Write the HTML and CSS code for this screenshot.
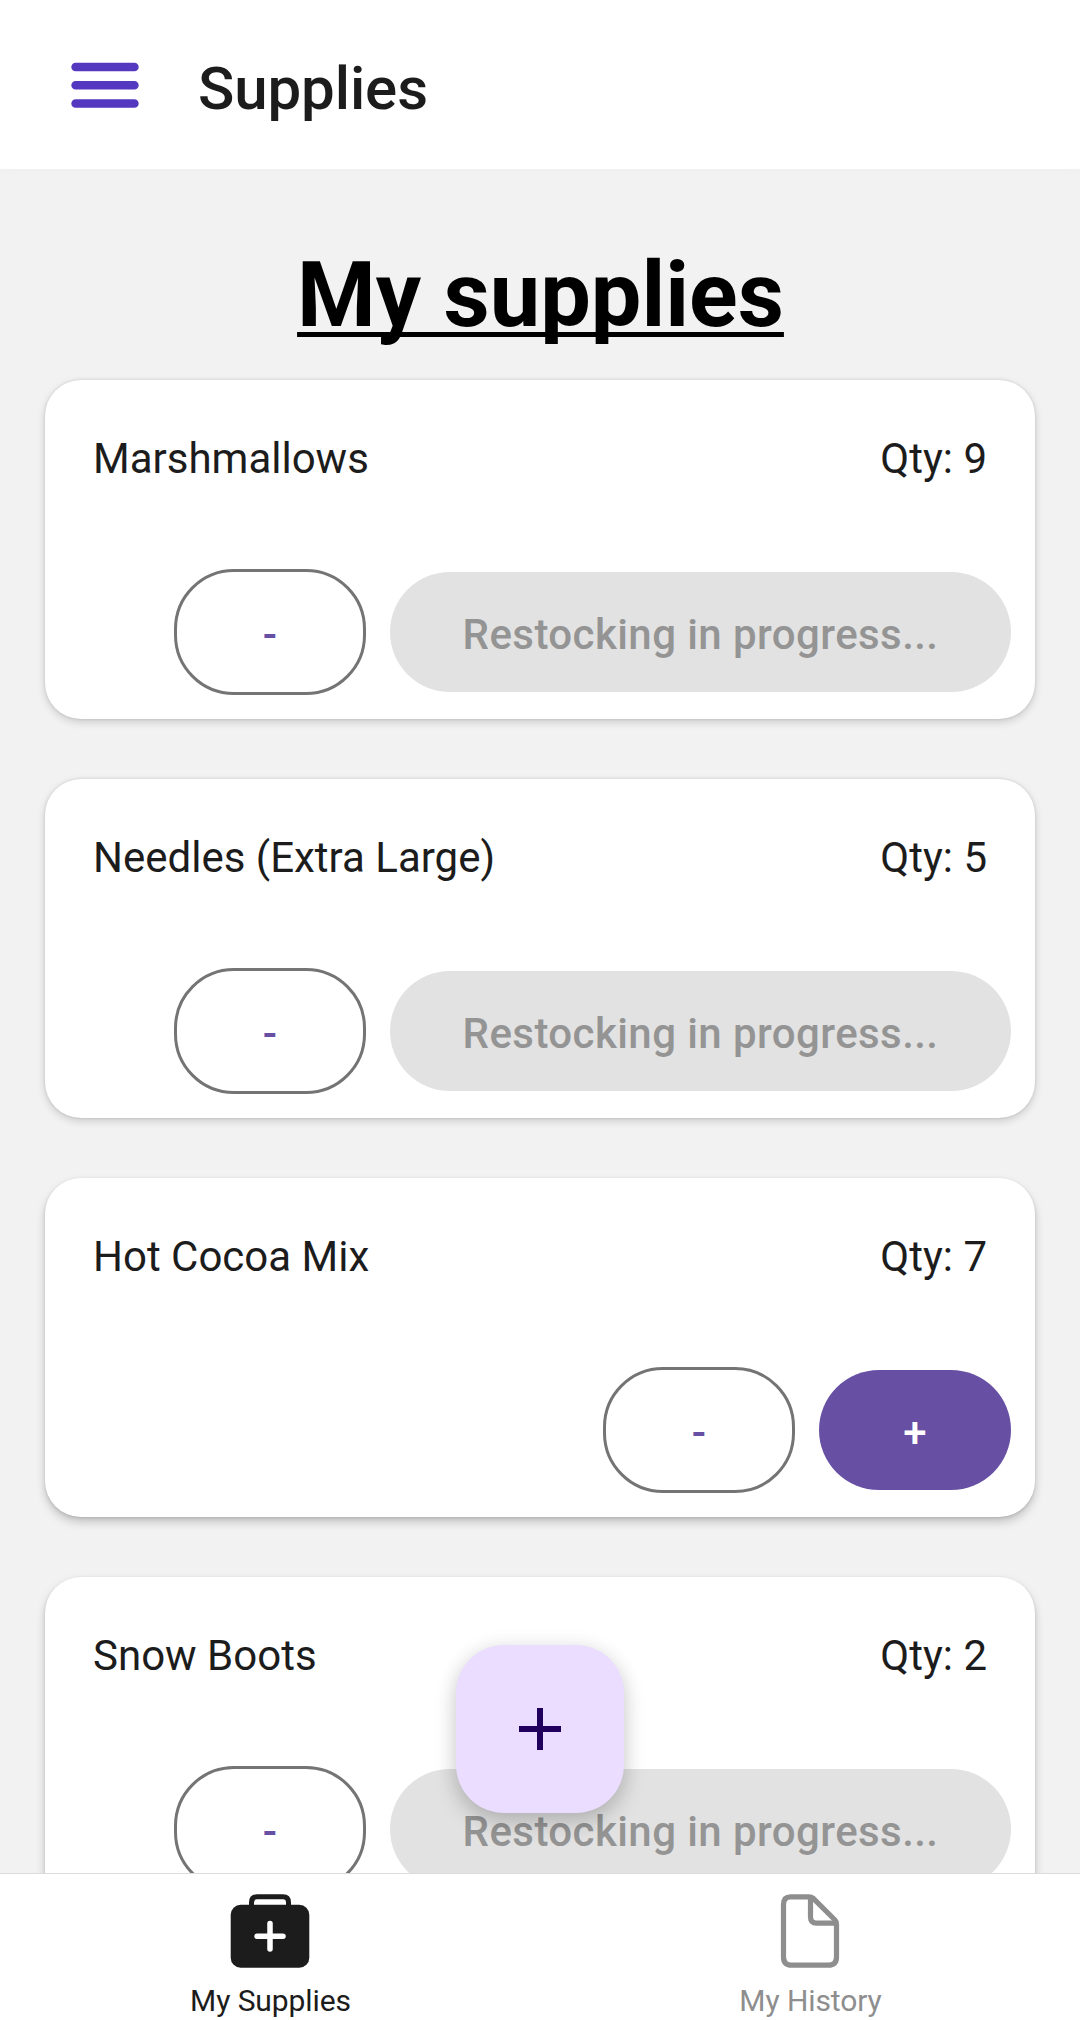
FILE: index.html
```html
<!DOCTYPE html>
<html lang="en">
<head>
<meta charset="utf-8">
<title>Supplies</title>
<link rel="stylesheet" href="styles.css">
</head>
<body>
<div class="screen">
  <header class="app-bar">
    <svg class="menu-icon" width="68" height="46" viewBox="0 0 68 46">
      <path d="M4.600 5H63.400M4.600 23.300H63.400M4.600 41.500H63.400"/>
    </svg>
    <span class="app-title">Supplies</span>
  </header>

  <main class="content">
    <h1 class="heading"><span class="heading-text">My supplies</span></h1>
    <section class="card">
      <div class="card-info"><span>Marshmallows</span><span>Qty: 9</span></div>
      <div class="card-actions">
        <button class="btn btn-outlined">-</button>
        <button class="btn btn-disabled" disabled>Restocking in progress...</button>
      </div>
    </section>
    <section class="card">
      <div class="card-info"><span>Needles (Extra Large)</span><span>Qty: 5</span></div>
      <div class="card-actions">
        <button class="btn btn-outlined">-</button>
        <button class="btn btn-disabled" disabled>Restocking in progress...</button>
      </div>
    </section>
    <section class="card card-low">
      <div class="card-info"><span>Hot Cocoa Mix</span><span>Qty: 7</span></div>
      <div class="card-actions">
        <button class="btn btn-outlined">-</button>
        <button class="btn btn-filled">+</button>
      </div>
    </section>
    <section class="card card-low">
      <div class="card-info"><span>Snow Boots</span><span>Qty: 2</span></div>
      <div class="card-actions">
        <button class="btn btn-outlined">-</button>
        <button class="btn btn-disabled" disabled>Restocking in progress...</button>
      </div>
    </section>
    <button class="fab" aria-label="Add">
      <svg width="42" height="42" viewBox="0 0 42 42"><path d="M21 0V42M0 21H42"/></svg>
    </button>
  </main>

  <nav class="tab-bar">
    <a class="tab tab-active">
      <svg class="tab-icon" width="80" height="74" viewBox="0 0 80 74">
        <rect class="solid" x="0.700" y="10.800" width="78.600" height="63" rx="10"/>
        <path class="handle" d="M21.500 13V8.500Q21.500 2.800 27 2.800H53Q58.500 2.800 58.500 8.500V13"/>
        <path class="cross" d="M40 29.500V55M27 42.300H53"/>
      </svg>
      <span>My Supplies</span>
    </a>
    <a class="tab">
      <svg class="tab-icon" width="80" height="74" viewBox="0 0 80 74">
        <path class="outline" d="M20.500 2.800H39Q41.500 2.800 43 4.200L65 26Q66.500 27.500 66.500 30V63Q66.500 71.200 58.500 71.200H21.500Q13.500 71.200 13.500 63V10.500Q13.500 2.800 20.500 2.800Z"/>
        <path class="outline" d="M40.500 4V23Q40.500 29.200 46.500 29.200H65"/>
      </svg>
      <span>My History</span>
    </a>
  </nav>
</div>
</body>
</html>
```
FILE: styles.css
```css
* {
  box-sizing: border-box;
}

body {
  margin: 0;
  font-family: Roboto, sans-serif;
  color: #1c1c1c;
}

.screen {
  display: flex;
  flex-direction: column;
  width: 1080px;
  height: 2020px;
  overflow: hidden;
  background: #f2f2f2;
}

.app-bar {
  display: flex;
  align-items: center;
  flex: none;
  gap: 59px;
  height: 169px;
  padding-left: 71px;
  background: #fff;
  box-shadow: 0 0 15px #00000005;
}

.menu-icon {
  fill: none;
  stroke: #5438c0;
  stroke-width: 8.6;
  stroke-linecap: round;
}

.app-title {
  padding-top: 8px;
  font-size: 60px;
  font-weight: 500;
  letter-spacing: -0.1px;
  line-height: 70px;
}

.content {
  position: relative;
  display: flex;
  flex-direction: column;
  flex: 1;
  min-height: 0;
  gap: 60px;
  padding: 67px 45px 0;
  overflow: hidden;
}

.heading {
  margin: 0 0 -36px;
  padding-left: 1px;
  color: #000;
  font-size: 90px;
  font-weight: 700;
  line-height: 120px;
  text-align: center;
}

.heading-text {
  text-decoration: underline;
  text-decoration-thickness: 5px;
  text-decoration-skip-ink: none;
  text-underline-offset: 6px;
}

.card {
  display: flex;
  flex-direction: column;
  justify-content: space-between;
  flex: none;
  height: 339px;
  padding: 49px 24px 24px 48px;
  border-radius: 36px;
  background: #fff;
  box-shadow: 0 0 3px #00000020, 0 3px 9px #0000002a;
}

.card-low {
  box-shadow: 0 1px 3px #00000020, 0 5px 10px #00000034;
}

.card-info {
  display: flex;
  justify-content: space-between;
  padding-right: 24px;
  font-size: 42px;
  line-height: 60px;
}

.card-actions {
  display: flex;
  align-items: center;
  justify-content: flex-end;
  gap: 24px;
  height: 126px;
}

.btn {
  flex: none;
  min-width: 192px;
  height: 120px;
  padding: 5px 60px 0;
  border: 0;
  border-radius: 60px;
  font-family: inherit;
  font-size: 42px;
  font-weight: 500;
  letter-spacing: 0.42px;
  line-height: 60px;
}

.btn-outlined {
  height: 126px;
  border: 3px solid #747474;
  background: transparent;
  color: #6750a4;
}

.btn-disabled {
  width: 621px;
  background: #e2e2e2;
  color: #949494;
}

.btn-filled {
  background: #6750a4;
  color: #fff;
}

.fab {
  position: absolute;
  bottom: 60px;
  left: 456px;
  display: grid;
  place-items: center;
  width: 168px;
  height: 168px;
  padding: 0;
  border: 0;
  border-radius: 48px;
  background: #eaddff;
  box-shadow: 0 0 20px #00000012, 0 10px 22px #0000002e;
}

.fab svg {
  stroke: #21005d;
  stroke-width: 6;
}

.tab-bar {
  display: flex;
  flex: none;
  height: 147px;
  border-top: 1px solid #dcdcdc;
  background: #fff;
}

.tab {
  display: flex;
  flex: 1;
  flex-direction: column;
  align-items: center;
  gap: 13px;
  padding-top: 20px;
  color: #8e8e8f;
  font-size: 30px;
  letter-spacing: -0.1px;
  line-height: 40px;
}

.tab-active {
  color: #1c1c1c;
}

.tab span {
  padding-left: 1px;
}

.tab-icon {
  flex: none;
  fill: none;
  stroke-linecap: round;
  stroke-linejoin: round;
}

.solid {
  fill: #1c1c1c;
}

.handle {
  stroke: #1c1c1c;
  stroke-width: 5;
}

.cross {
  stroke: #fff;
  stroke-width: 5.5;
}

.outline {
  stroke: #8e8e8f;
  stroke-width: 5.2;
}
```
